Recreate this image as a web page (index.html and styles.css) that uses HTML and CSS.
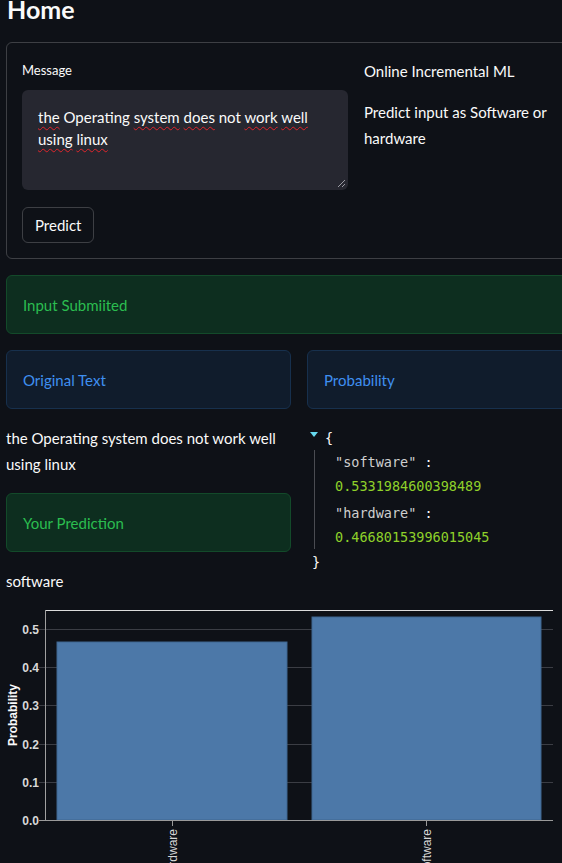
FILE: index.html
```html
<!DOCTYPE html>
<html lang="en">
<head>
<meta charset="utf-8">
<title>Home</title>
<link rel="stylesheet" href="styles.css">
</head>
<body>
<main class="page">
  <h1 class="title">Home</h1>

  <section class="form">
    <div class="form-left">
      <div class="label">Message</div>
      <div class="textarea">
        <span class="sp">the</span> Operating <span class="sp">system</span> <span class="sp">does</span> not <span class="sp">work</span> <span class="sp">well</span> <span class="sp">using</span> <span class="sp">linux</span>
        <svg class="resize" width="9" height="9" viewBox="0 0 9 9"><path d="M1 8 L8 1 M5 8 L8 5" stroke="#9a9aa2" stroke-width="1" fill="none"/></svg>
      </div>
      <button class="btn">Predict</button>
    </div>
    <div class="form-right">
      <p class="p-first">Online Incremental ML</p>
      <p>Predict input as Software or hardware</p>
    </div>
  </section>

  <div class="alert success">Input Submiited</div>

  <div class="cols">
    <div class="col">
      <div class="alert info">Original Text</div>
      <p class="plain">the Operating system does not work well using linux</p>
      <div class="alert success">Your Prediction</div>
      <p class="plain">software</p>
    </div>
    <div class="col">
      <div class="alert info">Probability</div>
      <div class="json">
        <div class="json-open"><span class="arrow"></span><span class="brace">{</span></div>
        <div class="json-body">
          <div class="entry"><div class="key">"software" <span class="colon">:</span></div><div class="num">0.5331984600398489</div></div>
          <div class="entry"><div class="key">"hardware" <span class="colon">:</span></div><div class="num">0.46680153996015045</div></div>
        </div>
        <div class="json-close">}</div>
      </div>
    </div>
  </div>

  <div class="chart">
    <svg width="556" height="270" viewBox="0 0 556 270">
      <g stroke="#3b3d44" stroke-width="1">
        <line x1="33" y1="29.5" x2="547" y2="29.5"/>
        <line x1="33" y1="67.5" x2="547" y2="67.5"/>
        <line x1="33" y1="105.5" x2="547" y2="105.5"/>
        <line x1="33" y1="144.5" x2="547" y2="144.5"/>
        <line x1="33" y1="182.5" x2="547" y2="182.5"/>
      </g>
      <rect x="51" y="42" width="230" height="178" fill="#4c78a8" stroke="#3f6690" stroke-width="1"/>
      <rect x="306" y="17" width="229" height="203" fill="#4c78a8" stroke="#3f6690" stroke-width="1"/>
      <line x1="39" y1="10.5" x2="547" y2="10.5" stroke="#dcdcdc" stroke-width="1"/>
      <line x1="39.5" y1="10" x2="39.5" y2="220.5" stroke="#a0a0a0" stroke-width="1"/>
      <line x1="33" y1="220.5" x2="547" y2="220.5" stroke="#9a9a9a" stroke-width="1"/>
      <line x1="166.5" y1="220" x2="166.5" y2="226" stroke="#9a9a9a" stroke-width="1"/>
      <line x1="420.5" y1="220" x2="420.5" y2="226" stroke="#9a9a9a" stroke-width="1"/>
      <g class="ytick" text-anchor="end">
        <text x="33" y="33.5">0.5</text>
        <text x="33" y="71.5">0.4</text>
        <text x="33" y="109.5">0.3</text>
        <text x="33" y="148.5">0.2</text>
        <text x="33" y="186.5">0.1</text>
        <text x="33" y="224.5">0.0</text>
      </g>
      <text class="ytitle" transform="translate(11 115) rotate(-90)" text-anchor="middle">Probability</text>
      <text class="xtick" transform="translate(170.5 229) rotate(-90)" text-anchor="end">hardware</text>
      <text class="xtick" transform="translate(424.5 229) rotate(-90)" text-anchor="end">software</text>
    </svg>
  </div>
</main>
</body>
</html>
```

FILE: styles.css
```css
html, body {
  margin: 0;
  padding: 0;
  background: #0e1117;
  height: 863px;
  overflow: hidden;
}

body {
  color: #fafafa;
  font-family: Lato, "Open Sans", sans-serif;
  font-size: 15px;
}

.page {
  width: 586px;
  padding: 0 6px;
  display: flex;
  flex-direction: column;
  gap: 16px;
}

.title {
  margin: -7px 0 0 1px;
  font-size: 25px;
  font-weight: 700;
  line-height: 32px;
  height: 33px;
}

.form {
  display: flex;
  gap: 16px;
  border: 1px solid rgba(250, 250, 250, 0.2);
  border-radius: 6px;
  padding: 16px 15px 15px;
}

.form-left {
  width: 326px;
  flex: none;
  display: flex;
  flex-direction: column;
  align-items: flex-start;
}

.label {
  font-size: 13px;
  line-height: 22px;
  margin-bottom: 9px;
}

.textarea {
  position: relative;
  box-sizing: border-box;
  width: 326px;
  height: 100px;
  background: #262730;
  border-radius: 6px;
  padding: 16px 16px;
  line-height: 22.4px;
}

.sp {
  text-decoration: underline wavy #e0252b;
  text-decoration-thickness: 1px;
  text-underline-offset: 3px;
}

.resize {
  position: absolute;
  right: 2px;
  bottom: 2px;
}

.btn {
  margin-top: 17px;
  height: 36px;
  padding: 0 12px;
  background: transparent;
  color: #fafafa;
  font-family: inherit;
  font-size: 15px;
  border: 1px solid rgba(250, 250, 250, 0.2);
  border-radius: 6px;
}

.form-right {
  flex: 1;
}

.form-right p {
  margin: 0 0 15px;
  line-height: 26px;
}

.form-right .p-first {
  margin-top: -1px;
}

.alert {
  box-sizing: border-box;
  height: 59px;
  padding: 0 16px;
  display: flex;
  align-items: center;
  border-radius: 6px;
  border: 1px solid;
}

.success {
  background: #0d2e1f;
  border-color: #134a2a;
  color: #2bbd50;
}

.info {
  background: #101c2c;
  border-color: #17304d;
  color: #3f8ff0;
}

.cols {
  display: flex;
  gap: 16px;
}

.col {
  width: 285px;
  flex: none;
  display: flex;
  flex-direction: column;
  gap: 16px;
}

.plain {
  margin: 0;
  line-height: 26px;
}

.json {
  font-family: "DejaVu Sans Mono", "Liberation Mono", monospace;
  font-size: 13.5px;
  padding-left: 2px;
}

.json-open {
  display: flex;
  align-items: center;
  height: 25px;
}

.arrow {
  width: 0;
  height: 0;
  border-left: 4.5px solid transparent;
  border-right: 4.5px solid transparent;
  border-top: 5px solid #66d9ef;
  margin: -6px 7px 0 1px;
}

.brace,
.json-close {
  color: #fafafa;
}

.json-body {
  margin-left: 5px;
  border-left: 1px solid #4a4c52;
  padding-left: 20px;
}

.entry + .entry {
  margin-top: 3px;
}

.key {
  line-height: 24px;
  color: #cfcfcf;
}

.colon {
  color: #fafafa;
}

.num {
  line-height: 24px;
  color: #8fd12a;
}

.json-close {
  line-height: 26px;
  padding-left: 3px;
}

.chart {
  margin-top: -10px;
}

.chart svg {
  display: block;
}

.ytick text {
  font-family: "Liberation Sans", Arial, sans-serif;
  font-size: 12px;
  font-weight: 700;
  fill: #d8d8d8;
}

.ytitle {
  font-family: "Liberation Sans", Arial, sans-serif;
  font-size: 12px;
  font-weight: 700;
  fill: #fafafa;
}

.xtick {
  font-family: "Liberation Sans", Arial, sans-serif;
  font-size: 12px;
  fill: #d8d8d8;
}
```
